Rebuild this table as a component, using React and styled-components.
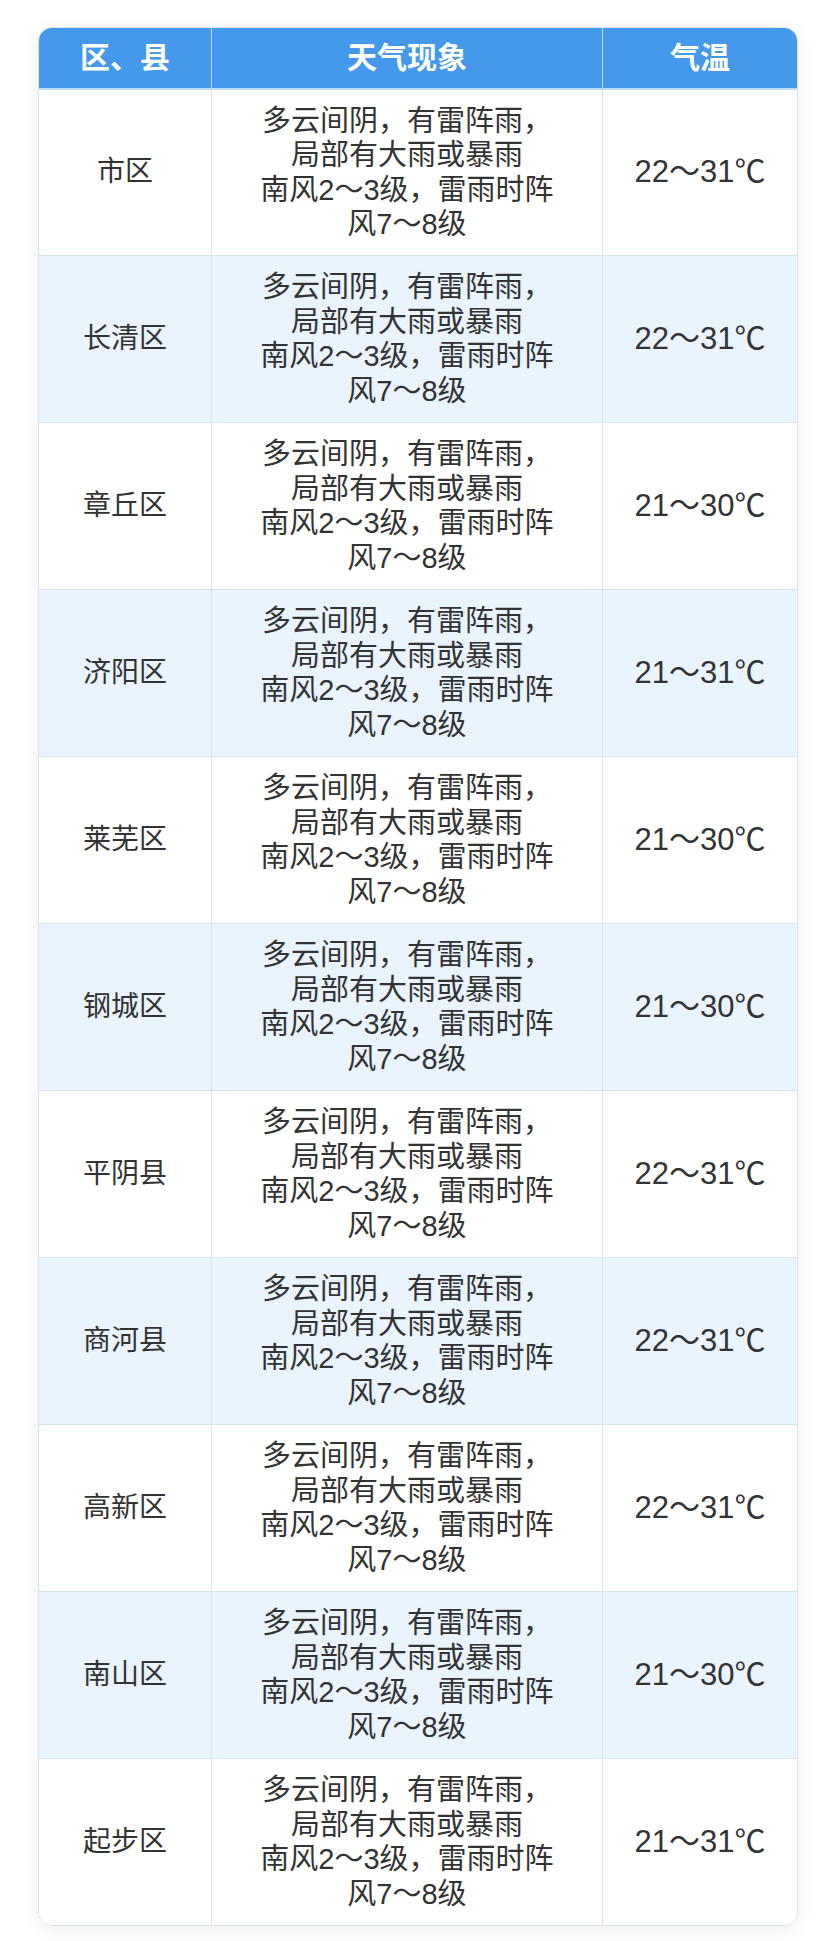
import React from 'react';
import styled, { createGlobalStyle } from 'styled-components';

const GlobalStyle = createGlobalStyle`
  html, body {
    margin: 0;
    padding: 0;
    background: #fff;
  }
  body {
    font-family: "Liberation Sans", "Noto Sans CJK SC", sans-serif;
    color: #333;
  }
`;

const Page = styled.div`
  padding: 27px 32px 18px 38px;
`;

const Table = styled.div`
  border: 1.5px solid #d9e4ee;
  border-radius: 14px;
  overflow: hidden;
  box-shadow: 0 4px 18px rgba(0, 0, 0, 0.07);
`;

const Row = styled.div`
  display: grid;
  grid-template-columns: 173px 391px 1fr;
  height: ${(p) => (p.$head ? '60px' : '167px')};
  background: ${(p) => (p.$head ? '#4599eb' : p.$striped ? '#e9f4fe' : '#fff')};
  border-top: ${(p) => (p.$first ? '2px solid #bcdcf8' : p.$head ? 'none' : '1.5px solid #d9e4ee')};
  box-sizing: border-box;
`;

const Cell = styled.div`
  display: flex;
  align-items: center;
  justify-content: center;
  text-align: center;
  border-right: ${(p) => (p.$last ? 'none' : p.$head ? '1.5px solid #bcdcf8' : '1.5px solid #d9e4ee')};
  font-size: ${(p) => (p.$head ? '30px' : p.$temp ? '31px' : p.$wide ? '29px' : '28px')};
  font-weight: ${(p) => (p.$head ? 700 : 400)};
  color: ${(p) => (p.$head ? '#fff' : '#333')};
  line-height: 34.5px;
`;

const Lines = styled.div`
  display: flex;
  flex-direction: column;
  align-items: center;
`;

const weather = ['多云间阴，有雷阵雨，', '局部有大雨或暴雨', '南风2～3级，雷雨时阵', '风7～8级'];

const rows = [
  ['市区', '22～31℃'],
  ['长清区', '22～31℃'],
  ['章丘区', '21～30℃'],
  ['济阳区', '21～31℃'],
  ['莱芜区', '21～30℃'],
  ['钢城区', '21～30℃'],
  ['平阴县', '22～31℃'],
  ['商河县', '22～31℃'],
  ['高新区', '22～31℃'],
  ['南山区', '21～30℃'],
  ['起步区', '21～31℃'],
];

export default function App() {
  return (
    <>
      <GlobalStyle />
      <Page>
        <Table>
          <Row $head>
            <Cell $head>区、县</Cell>
            <Cell $head>天气现象</Cell>
            <Cell $head $last>气温</Cell>
          </Row>
          {rows.map(([area, temp], i) => (
            <Row key={area} $first={i === 0} $striped={i % 2 === 1}>
              <Cell>{area}</Cell>
              <Cell $wide>
                <Lines>
                  {weather.map((l) => (
                    <span key={l}>{l}</span>
                  ))}
                </Lines>
              </Cell>
              <Cell $temp $last>{temp}</Cell>
            </Row>
          ))}
        </Table>
      </Page>
    </>
  );
}
